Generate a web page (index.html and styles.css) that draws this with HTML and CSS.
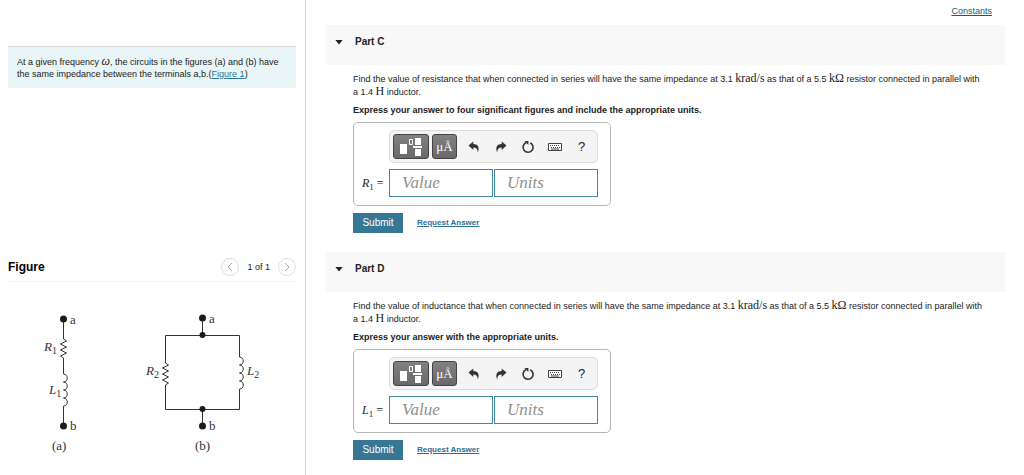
FILE: index.html
```html
<!DOCTYPE html>
<html lang="en">
<head>
<meta charset="utf-8">
<title>Circuit impedance</title>
<meta name="viewport" content="width=device-width, initial-scale=1">
<link rel="stylesheet" href="styles.css">
</head>
<body>
<svg class="defs" aria-hidden="true">
  <symbol id="template" viewBox="0 0 24 20">
    <path fill="#fff" d="M1 7h7v10H1zM16 1h6v7h-6zM16 12h6v7h-6zM14 9h9v2h-9z"/>
    <path fill="none" stroke="#fff" d="M10.500 2.500h3v5h-3z"/>
  </symbol>
  <symbol id="undo" viewBox="0 0 12 12">
    <path fill="#333" d="M.5 4.600 5.300.5v2.400C9.800 3 12 6 9.800 11.500 9.800 8 8.300 6.600 5.300 6.500v2.400z"/>
  </symbol>
  <symbol id="redo" viewBox="0 0 12 12">
    <path fill="#333" d="M11.500 4.600 6.700.5v2.400C2.200 3 0 6 2.200 11.500 2.200 8 3.700 6.600 6.700 6.500v2.400z"/>
  </symbol>
  <symbol id="reset" viewBox="0 0 14 14">
    <path fill="none" stroke="#333" stroke-width="1.600" d="M9.300 2.800A5 5 0 1 1 5 2.700"/>
    <path fill="#333" d="M3.400 1h4v4z"/>
  </symbol>
  <symbol id="keyboard" viewBox="0 0 16 10">
    <path fill="#fff" stroke="#444" d="M1.500 1.500h13v7h-13z"/>
    <path fill="none" stroke="#444" stroke-dasharray="1 1" d="M3 3.500h10M4 5.500h9"/>
    <path fill="none" stroke="#444" d="M4 7h8"/>
  </symbol>
</svg>
<div class="page">
  <aside class="side">
    <section class="intro">
      <p class="prompt">At a given frequency <i class="math">ω</i>, the circuits in the figures (a) and (b) have the same impedance between the terminals a,b.(<a class="link" href="#figure">Figure 1</a>)</p>
    </section>
    <section class="figure" id="figure">
      <header class="figure-head">
        <h2 class="figure-title">Figure</h2>
        <nav class="pager" aria-label="Figure pages">
          <button class="pager-btn" type="button" aria-label="Previous figure"><svg class="chevron" viewBox="0 0 8 10"><path d="M6 1 2 5l4 4"/></svg></button>
          <span>1 of 1</span>
          <button class="pager-btn" type="button" aria-label="Next figure"><svg class="chevron" viewBox="0 0 8 10"><path d="m2 1 4 4-4 4"/></svg></button>
        </nav>
      </header>
      <svg class="circuit" viewBox="0 0 288 170" role="img" aria-label="Series circuit (a) and parallel circuit (b)">
        <g class="wire">
          <path d="M55.500 16v20l3 2-6 3 6 3-6 3 6 3-6 3 3 2v16c5 0 5 8 0 8c5 0 5 8 0 8c5 0 5 8 0 8c5 0 5 8 0 8v20"/>
          <path d="M194.500 16v17M157.500 60V32.500h74V54c5 0 5 8 0 8c5 0 5 8 0 8c5 0 5 8 0 8c5 0 5 8 0 8v20.500h-74V82M157.500 60l3 2-6 3 6 3-6 3 6 3-6 3 6 3-3 2M194.500 107v17"/>
        </g>
        <g class="node">
          <circle cx="55.500" cy="16" r="3.500"/><circle cx="55.500" cy="123" r="3.500"/>
          <circle cx="194.500" cy="15" r="3.500"/><circle cx="194.500" cy="32" r="3"/>
          <circle cx="194.500" cy="106" r="3"/><circle cx="194.500" cy="123" r="3.500"/>
        </g>
        <g class="circuit-text">
          <text x="62" y="21">a</text><text x="62" y="127">b</text>
          <text x="201" y="20">a</text><text x="201" y="127">b</text>
          <text x="36" y="48"><tspan class="var">R</tspan><tspan class="sub" dy="3">1</tspan></text>
          <text x="41" y="91"><tspan class="var">L</tspan><tspan class="sub" dy="3">1</tspan></text>
          <text x="138" y="72"><tspan class="var">R</tspan><tspan class="sub" dy="3">2</tspan></text>
          <text x="239" y="72"><tspan class="var">L</tspan><tspan class="sub" dy="3">2</tspan></text>
          <text x="44" y="147">(a)</text><text x="187" y="147">(b)</text>
        </g>
      </svg>
    </section>
  </aside>
  <main class="main">
    <div class="topbar"><a class="constants" href="#constants">Constants</a></div>

    <section class="part">
      <header class="part-head"><button class="toggle" type="button" aria-label="Collapse Part C"></button><h2 class="part-title">Part C</h2></header>
      <div class="part-body">
        <p class="question">Find the value of resistance that when connected in series will have the same impedance at 3.1 <span class="math">krad/s</span> as that of a 5.5 <span class="math">kΩ</span> resistor connected in parallel with a 1.4 <span class="math">H</span> inductor.</p>
        <p class="express">Express your answer to four significant figures and include the appropriate units.</p>
        <div class="answer">
          <div class="toolbar">
            <button class="tool dark wide" type="button" aria-label="Templates"><svg class="ico-template"><use href="#template"/></svg></button>
            <button class="tool dark" type="button" aria-label="Symbols">μÅ</button>
            <button class="tool" type="button" aria-label="Undo"><svg class="ico-arrow"><use href="#undo"/></svg></button>
            <button class="tool" type="button" aria-label="Redo"><svg class="ico-arrow"><use href="#redo"/></svg></button>
            <button class="tool" type="button" aria-label="Reset"><svg class="ico-reset"><use href="#reset"/></svg></button>
            <button class="tool" type="button" aria-label="Keyboard"><svg class="ico-keyboard"><use href="#keyboard"/></svg></button>
            <button class="tool" type="button" aria-label="Help">?</button>
          </div>
          <label class="var-label" for="value-c"><i>R</i><sub>1</sub> =</label>
          <div class="fields">
            <input class="field" id="value-c" type="text" placeholder="Value">
            <input class="field" type="text" placeholder="Units" aria-label="Units">
          </div>
        </div>
        <div class="actions"><button class="submit" type="button">Submit</button><a class="request" href="#answer-c">Request Answer</a></div>
      </div>
    </section>

    <section class="part">
      <header class="part-head"><button class="toggle" type="button" aria-label="Collapse Part D"></button><h2 class="part-title">Part D</h2></header>
      <div class="part-body">
        <p class="question">Find the value of inductance that when connected in series will have the same impedance at 3.1 <span class="math">krad/s</span> as that of a 5.5 <span class="math">kΩ</span> resistor connected in parallel with a 1.4 <span class="math">H</span> inductor.</p>
        <p class="express">Express your answer with the appropriate units.</p>
        <div class="answer">
          <div class="toolbar">
            <button class="tool dark wide" type="button" aria-label="Templates"><svg class="ico-template"><use href="#template"/></svg></button>
            <button class="tool dark" type="button" aria-label="Symbols">μÅ</button>
            <button class="tool" type="button" aria-label="Undo"><svg class="ico-arrow"><use href="#undo"/></svg></button>
            <button class="tool" type="button" aria-label="Redo"><svg class="ico-arrow"><use href="#redo"/></svg></button>
            <button class="tool" type="button" aria-label="Reset"><svg class="ico-reset"><use href="#reset"/></svg></button>
            <button class="tool" type="button" aria-label="Keyboard"><svg class="ico-keyboard"><use href="#keyboard"/></svg></button>
            <button class="tool" type="button" aria-label="Help">?</button>
          </div>
          <label class="var-label" for="value-d"><i>L</i><sub>1</sub> =</label>
          <div class="fields">
            <input class="field" id="value-d" type="text" placeholder="Value">
            <input class="field" type="text" placeholder="Units" aria-label="Units">
          </div>
        </div>
        <div class="actions"><button class="submit" type="button">Submit</button><a class="request" href="#answer-d">Request Answer</a></div>
      </div>
    </section>
  </main>
</div>
</body>
</html>
```
FILE: styles.css
```css
* { box-sizing: border-box; }
body {
  margin: 0;
  background: #fff;
  color: #222;
  font: 9px/12px "Liberation Sans", Arial, sans-serif;
}
h2, p { margin: 0; }
button, input { font: inherit; color: inherit; margin: 0; }
button { padding: 0; border: 0; background: none; cursor: pointer; }
.defs { display: none; }
.math { font-family: "Liberation Serif", "Times New Roman", serif; font-size: 12px; line-height: 0; }

.page { display: grid; grid-template-columns: 306px 1fr; min-height: 100vh; }

/* Left column */
.side { padding: 0 9px 0 8px; border-right: 1px solid #d3d5dc; }
.intro { min-height: 252px; padding-top: 46px; }
.prompt { padding: 9px 8px 8px 9px; border-top: 1px solid #d5dfe1; background: #e9f5f7; }
.link { color: #2c7499; }
.figure-head {
  display: flex;
  align-items: center;
  justify-content: space-between;
  height: 30px;
  border-bottom: 1px solid #f3f3f3;
}
.figure-title { font-size: 12px; color: #000; }
.pager { display: flex; align-items: center; gap: 8px; }
.pager-btn {
  display: grid;
  place-items: center;
  width: 18px;
  height: 18px;
  border: 1px solid #dedede;
  border-radius: 50%;
}
.chevron { width: 8px; height: 10px; fill: none; stroke: #aaa; }
.circuit { display: block; width: 100%; margin-top: 21px; }
.wire { fill: none; stroke: #333; stroke-width: 1; }
.node { fill: #1c1c1c; }
.circuit-text { font: 13px "Liberation Serif", "Times New Roman", serif; fill: #333; }
.var { font-style: italic; }
.sub { font-size: 10px; }

/* Right column */
.main { padding: 0 19px; }
.topbar { display: flex; justify-content: flex-end; height: 25px; padding: 5px 13px 0 0; }
.constants { color: #1d5873; }
.part-head { display: flex; align-items: center; gap: 12px; height: 40px; padding: 0 10px 6px; background: #f8f8f8; }
.toggle {
  width: 8px;
  height: 5px;
  background: #222;
  clip-path: polygon(0 0, 100% 0, 50% 100%);
}
.part-title { font-size: 10px; }
.part-body { padding: 8px 0 19px 28px; }
.question { padding-right: 20px; line-height: 13px; }
.express { margin-top: 5px; font-weight: bold; }
.answer {
  display: grid;
  grid-template-columns: 27px 209px;
  row-gap: 6px;
  width: fit-content;
  margin-top: 6px;
  padding: 7px 12px 8px 8px;
  border: 1px solid #b5b5b5;
  border-radius: 5px;
}
.toolbar {
  grid-column: 2;
  display: flex;
  align-items: center;
  height: 33px;
  padding-left: 3px;
  border: 1px solid #ddd;
  border-radius: 5px;
  background: #f4f4f4;
}
.tool { display: grid; place-items: center; width: 27px; height: 25px; color: #222; font-size: 13px; }
.dark {
  width: 25px;
  margin-right: 3px;
  border: 1px solid #444;
  border-radius: 3px;
  background: linear-gradient(#818181, #69696c);
  color: #fff;
  font-family: "Liberation Serif", "Times New Roman", serif;
}
.wide { width: 36px; }
.ico-template { width: 24px; height: 20px; }
.ico-arrow { width: 12px; height: 12px; }
.ico-reset { width: 14px; height: 14px; }
.ico-keyboard { width: 16px; height: 10px; }
.var-label { align-self: center; font: 12px/14px "Liberation Serif", "Times New Roman", serif; white-space: nowrap; }
.var-label sub { font-size: 9px; line-height: 0; }
.fields { display: flex; gap: 1px; }
.field {
  flex: 1;
  min-width: 0;
  height: 28px;
  padding: 0 12px;
  border: 1px solid #4386a3;
  border-radius: 0;
  background: #fff;
  font: 17px "Liberation Serif", "Times New Roman", serif;
}
.field::placeholder { color: #909090; font-style: italic; opacity: 1; }
.actions { display: flex; align-items: center; gap: 14px; margin-top: 7px; }
.submit { width: 50px; height: 20px; background: #357795; color: #fff; font-size: 10px; }
.request { color: #2c7095; font-size: 8px; font-weight: bold; }
```
